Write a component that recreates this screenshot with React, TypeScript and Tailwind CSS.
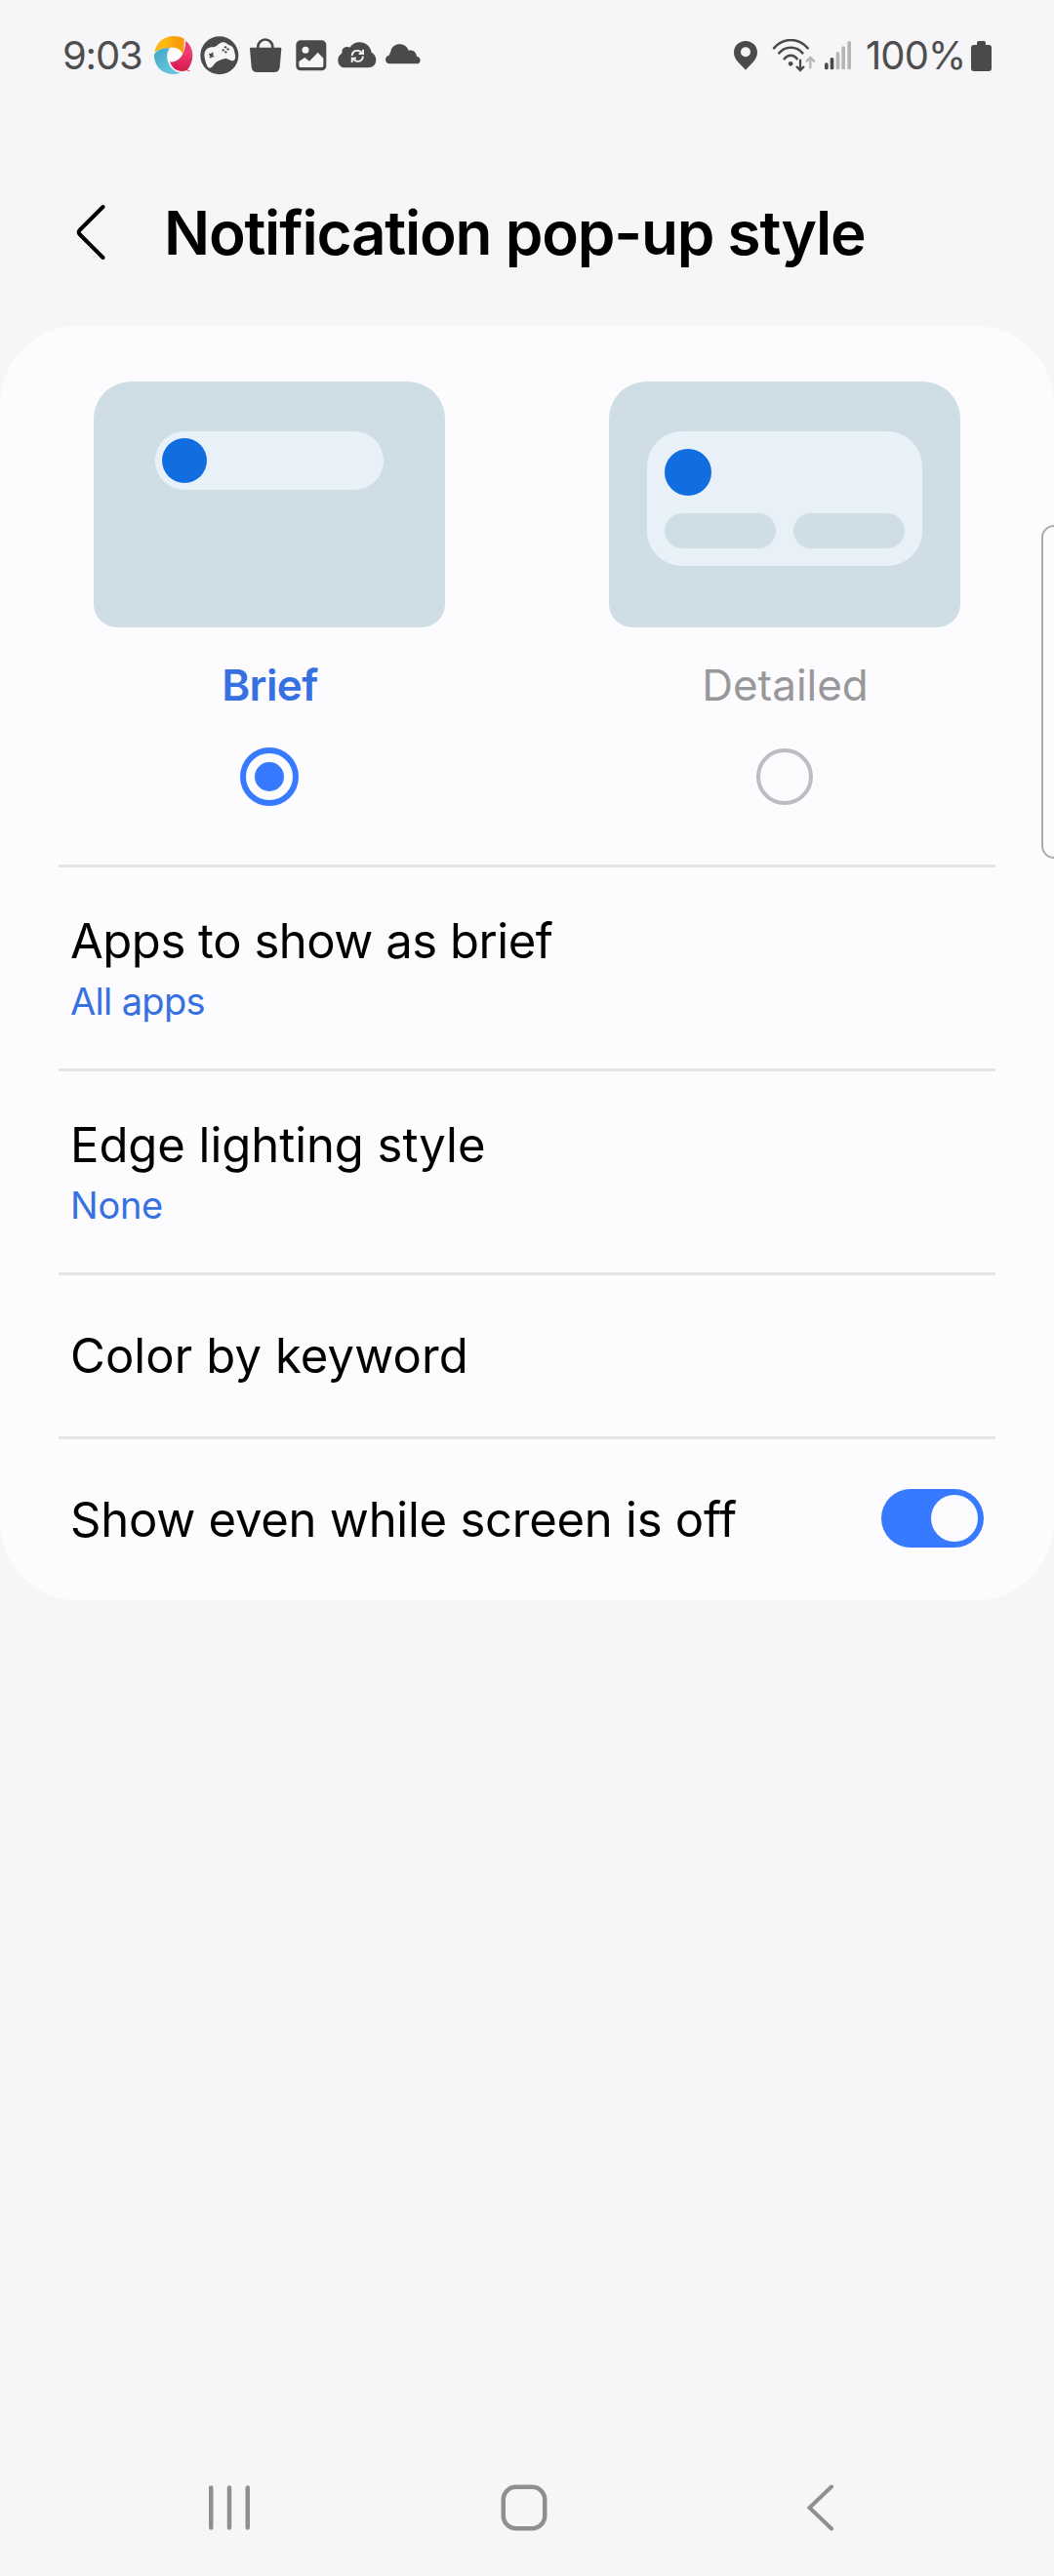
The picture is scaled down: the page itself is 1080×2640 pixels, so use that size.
import type { ReactNode } from "react";

function StatusBar() {
  return (
    <div className="flex h-[114px] items-center justify-between pl-[64px] pr-[64px] text-[40px] text-[#4e4e4e]">
      <div className="flex items-center">
        <span className="w-[92px] whitespace-nowrap leading-none tracking-[-1.2px]">9:03</span>
        {/* swirl, game pad, shopping bag, picture, cloud sync and cloud icons */}
        <svg className="h-[40px] w-[280px] shrink-0" viewBox="350 53 840 120">
          <defs>
            <linearGradient id="orange" x1="0" x2="1">
              <stop offset="0.35" stopColor="#fdb913" />
              <stop offset="0.8" stopColor="#fb9a0a" />
            </linearGradient>
            <linearGradient id="pink" x1="0" x2="0" y1="0" y2="1">
              <stop offset="0.4" stopColor="#ef3b71" />
              <stop offset="0.9" stopColor="#d81d52" />
            </linearGradient>
            <linearGradient id="teal" x1="0" x2="1" y1="0" y2="1">
              <stop offset="0.2" stopColor="#49aeca" />
              <stop offset="0.7" stopColor="#66c3dc" />
            </linearGradient>
          </defs>
          <circle cx="415" cy="112" r="52" fill="#fff" />
          <path d="M357 103C362 72 386 53 415 53c15 0 27 4 33 8 1 17 0 33-4 46-9-17-24-21-42-18-17 1-33 5-45 14z" fill="url(#orange)" />
          <path d="M453 67c13 11 21 27 21 45 0 17-7 33-17 46-25 9-45-2-53-26 23 2 47-15 49-65z" fill="url(#pink)" />
          <path d="M457 158l9 2" stroke="#ef3b71" strokeWidth="3" />
          <path d="M356 109c10-15 27-21 48-19-14 19-9 43 4 60 7 9 17 14 29 16-13 5-28 6-42 1-25-8-40-31-39-58z" fill="url(#teal)" />
          <g fill="#4a4a4a">
            <circle cx="556.500" cy="112" r="58.500" />
            <path d="M650 91q0-3 4-3h89q4 0 4 3l-5 57q-2 16-17 16h-53q-15 0-17-16z" />
            <path d="M675 92v-6a22.500 22.500 0 0 1 45 0v6" fill="none" stroke="#4a4a4a" strokeWidth="8" />
            <rect x="792" y="66" width="93" height="93" rx="14" />
            <path d="M944 150c-14 0-23-9-23-23 0-12 8-18 13-22-3-9 4-20 16-19 3 0 5 1 7 2 8-11 18-16 30-16 20 0 34 13 37 31 8 4 14 13 14 23 0 15-10 24-24 24z" />
            <path d="M1080 138c-8 0-13-5-13-12 0-8 5-13 11-14 3-5 1-5 5-11 2-15 15-23 27-23 14 0 24 8 28 19 13-2 23 4 25 18 7 1 11 6 11 12 0 7-5 11-11 11z" />
          </g>
          <path d="M512 101c3-8 10-12 19-14 9 0 12-1 18-5 6-6 12-10 20-10 10 2 12 6 18 9 10 3 13 8 15 18 3 11 5 20 2 25-5 7-11 5-17 2-9-4-13-5-21-2-11 3-17 7-23 12-5 6-8 13-16 15-6 1-10-7-13-19-3-12-6-20-2-31z" fill="#f6f6f8" />
          <path d="M525 108l14 8M536 104l-8 16" stroke="#4a4a4a" strokeWidth="6" />
          <g fill="#4a4a4a">
            <circle cx="575" cy="87" r="3.500" />
            <circle cx="568" cy="96" r="3.500" />
            <circle cx="583" cy="93" r="3.500" />
            <circle cx="576" cy="102" r="3.500" />
          </g>
          <circle cx="821" cy="95.500" r="10.500" fill="#f6f6f8" />
          <path d="M801 131l18-12 14 11 26-27 17 18v23q0 5-5 5h-65q-5 0-5-5z" fill="#f6f6f8" />
          <g fill="none" stroke="#f6f6f8" strokeWidth="5.500">
            <path d="M964 113c1-13 10-17 21-15l9 5M998 94v13h-13" />
            <path d="M998 115c-1 13-10 17-21 15l-9-5M964 134v-13h13" />
          </g>
        </svg>
      </div>
      {/* location, wifi, signal on the left of the charge level */}
      <div className="flex items-center">
        <svg className="h-[34px] w-[124px] shrink-0" viewBox="60 60 372 102">
          <path d="M99 66c-20 0-36 15-36 35 0 11 5 20 12 29l24 25 24-25c7-9 12-18 12-29 0-20-16-35-36-35zm0 19a15 15 0 1 1 0 30 15 15 0 0 1 0-30z" fill="#4a4a4a" />
          <g fill="none" stroke="#4a4a4a" strokeWidth="7.500" strokeLinecap="round">
            <path d="M186 88q22-25 52-25t52 25M202 103q14-17 36-17t36 17M218 121q9-11 20-11t19 11" />
            <path d="M267 125v30M257 146l10 10 10-10" strokeWidth="7" />
            <path d="M298 148v-29M287 128l11-11 11 11" stroke="#b6b6b7" strokeWidth="7" />
          </g>
          <circle cx="237.500" cy="136" r="7" fill="#4a4a4a" />
          <rect x="342" y="133" width="11" height="21" rx="5" fill="#4a4a4a" />
          <rect x="359" y="117" width="11" height="37" rx="5" fill="#4a4a4a" />
          <rect x="377" y="99" width="11" height="55" rx="5" fill="#b6b6b7" />
          <rect x="394" y="82" width="11" height="72" rx="5" fill="#b6b6b7" />
          <rect x="412" y="66" width="11" height="88" rx="5" fill="#b6b6b7" />
        </svg>
        <span className="ml-[12px] w-[108px] whitespace-nowrap leading-none tracking-[-0.9px]">100%</span>
        <svg className="h-[31px] w-[21px] shrink-0" viewBox="0 0 21 31">
          <path d="M6 2q0-2 2-2h5q2 0 2 2v2h3q3 0 3 3v21q0 3-3 3H3q-3 0-3-3V7q0-3 3-3h3z" fill="#4a4a4a" />
        </svg>
      </div>
    </div>
  );
}

function Row({ title, tracking, value, valueTracking = "", children }: { title: string; tracking: string; value?: string; valueTracking?: string; children?: ReactNode }) {
  return (
    <div className={`mx-[60px] flex items-center justify-between border-t-[3px] border-[#e4e4e6] pl-[12px] pr-[12px] ${value ? "h-[209px]" : "h-[168px]"}`}>
      <div className={value ? "mt-[3px]" : ""}>
        <div className={`whitespace-nowrap text-[49px] leading-[60px] text-black ${tracking}`}>{title}</div>
        {value && <div className={`mt-[5px] text-[38px] leading-[52px] text-[#3770e0] ${valueTracking}`}>{value}</div>}
      </div>
      {children}
    </div>
  );
}

export default function App() {
  return (
    <div className="relative flex h-[2640px] w-[1080px] flex-col overflow-hidden bg-[#f6f6f8] font-['Inter',sans-serif]">
      <StatusBar />
      <header className="flex h-[220px] items-center pl-[78px] pt-[28px]">
        <svg className="h-[58px] w-[32px] shrink-0" viewBox="0 0 32 58" fill="none" stroke="#000" strokeWidth="4" strokeLinecap="round" strokeLinejoin="round">
          <path d="M27.500 3L4 26.500q-2.500 2.500 0 5L27.500 55" />
        </svg>
        <h1 className="ml-[58px] mt-[2px] whitespace-nowrap text-[62px] font-semibold leading-[76px] tracking-[-1.200px] text-black">Notification pop-up style</h1>
      </header>

      <main className="h-[1306px] rounded-[80px] bg-[#fcfcfe] pt-[57px]">
        <div className="flex h-[495px] justify-between px-[96px]">
          <div className="flex w-[360px] flex-col items-center">
            <div className="h-[252px] w-full rounded-t-[38px] rounded-b-[24px] bg-[#cfdee5] pl-[63px] pt-[51px]">
              <div className="flex h-[60px] w-[234px] items-center rounded-full bg-[#e9f1f8] pl-[7px]">
                <div className="size-[46px] rounded-full bg-[#126ee0]" />
              </div>
            </div>
            <div className="mt-[29px] pl-[1px] text-[44px] font-semibold leading-[60px] tracking-[-0.600px] text-[#3770e0]">Brief</div>
            <div className="mt-[34px] flex size-[60px] items-center justify-center rounded-full border-[6px] border-[#387aff]">
              <div className="size-[30px] rounded-full bg-[#387aff]" />
            </div>
          </div>
          <div className="flex w-[360px] flex-col items-center">
            <div className="h-[252px] w-full rounded-t-[38px] rounded-b-[24px] bg-[#cfdee5] px-[39px] pt-[51px]">
              <div className="flex h-[138px] flex-col justify-between rounded-[36px] bg-[#e9f1f8] p-[18px]">
                <div className="size-[48px] rounded-full bg-[#126ee0]" />
                <div className="flex justify-between">
                  <div className="h-[36px] w-[114px] rounded-full bg-[#cfdee5]" />
                  <div className="h-[36px] w-[114px] rounded-full bg-[#cfdee5]" />
                </div>
              </div>
            </div>
            <div className="mt-[29px] pl-[1px] text-[44px] leading-[60px] text-[#98989a]">Detailed</div>
            <div className="mt-[35px] size-[58px] rounded-full border-[4px] border-[#bdbdc1]" />
          </div>
        </div>

        <Row title="Apps to show as brief" tracking="tracking-[-0.470px]" value="All apps" valueTracking="tracking-[-0.670px]" />
        <Row title="Edge lighting style" tracking="tracking-[-0.050px]" value="None" valueTracking="tracking-[-0.250px]" />
        <Row title="Color by keyword" tracking="tracking-[0.100px]" />
        <Row title="Show even while screen is off" tracking="tracking-[-0.250px]">
          <div className="mb-[3px] flex h-[60px] w-[105px] items-center justify-end rounded-full bg-[#387aff] p-[6px]">
            <div className="size-[48px] rounded-full bg-[#fcfcfe]" />
          </div>
        </Row>
      </main>

      <nav className="mt-auto flex h-[140px] items-center pl-[211px]">
        <svg className="size-[48px]" viewBox="0 0 48 48" fill="none" stroke="#8f8f8f" strokeWidth="4.500" strokeLinecap="round">
          <path d="M5.250 3.500v41M24 3.500v41M42.750 3.500v41" />
        </svg>
        <svg className="ml-[254px] size-[48px]" viewBox="0 0 48 48" fill="none" stroke="#8f8f8f" strokeWidth="4.500">
          <rect x="2.750" y="2.750" width="42.500" height="42.500" rx="13" />
        </svg>
        <svg className="ml-[255px] size-[48px]" viewBox="0 0 48 48" fill="none" stroke="#8f8f8f" strokeWidth="4" strokeLinecap="round">
          <path d="M36 2.500L13.500 24 36 45.500" />
        </svg>
      </nav>

      {/* edge panel handle overlapping the right side of the screen */}
      <div className="absolute -right-[20px] top-[538px] h-[342px] w-[33px] rounded-[13px] border-[2px] border-[#adadae] bg-[#fcfcfe]" />
    </div>
  );
}
